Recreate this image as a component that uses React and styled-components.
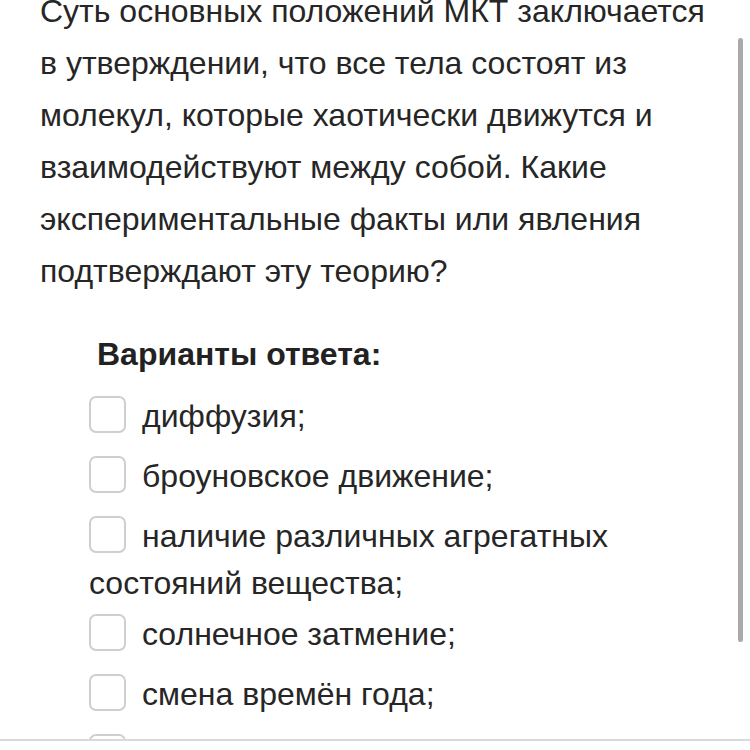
import React from 'react'
import styled, { createGlobalStyle } from 'styled-components'

const GlobalStyle = createGlobalStyle`
  html, body {
    margin: 0;
    padding: 0;
    background: #fff;
    overflow: hidden;
  }
  body {
    font-family: "Liberation Sans", Arial, sans-serif;
    color: #262626;
  }
`

const Page = styled.div`
  padding: 0 36px 0 40px;
  margin-top: -15px;
`

const Question = styled.p`
  margin: 0;
  font-size: 32px;
  line-height: 52px;
`

const Answers = styled.div`
  margin-top: 34px;
  padding-left: 49px;
`

const Heading = styled.h3`
  margin: 0 0 18px 8px;
  font-size: 32px;
  line-height: 47px;
  font-weight: 700;
  color: #222;
`

const Option = styled.label`
  display: block;
  font-size: 32px;
  line-height: 38px;
  margin-bottom: 12px;
`

const Box = styled.span`
  display: inline-block;
  box-sizing: border-box;
  width: 37px;
  height: 37px;
  border: 2px solid #cfcfcf;
  border-radius: 7px;
  vertical-align: -17px;
  margin: 0 16px 11px 0;
`

const Scrollbar = styled.div`
  position: fixed;
  left: 738px;
  top: 38px;
  width: 5px;
  height: 604px;
  border-radius: 3px;
  background: #a9a9a9;
`

const BottomBar = styled.div`
  position: fixed;
  left: 0;
  right: 0;
  bottom: 0;
  height: 9px;
  background: #fff;
  border-top: 2px solid #d9d9d9;
`

const options = [
  'диффузия;',
  'броуновское движение;',
  'наличие различных агрегатных состояний вещества;',
  'солнечное затмение;',
  'смена времён года;',
  'трение;'
]

export default function App() {
  return (
    <>
      <GlobalStyle />
      <Page>
        <Question>
          Суть основных положений МКТ заключается в утверждении, что все тела
          состоят из молекул, которые хаотически движутся и взаимодействуют
          между собой. Какие экспериментальные факты или явления подтверждают
          эту теорию?
        </Question>
        <Answers>
          <Heading>Варианты ответа:</Heading>
          {options.map(text => (
            <Option key={text}>
              <Box />
              {text}
            </Option>
          ))}
        </Answers>
      </Page>
      <Scrollbar />
      <BottomBar />
    </>
  )
}
